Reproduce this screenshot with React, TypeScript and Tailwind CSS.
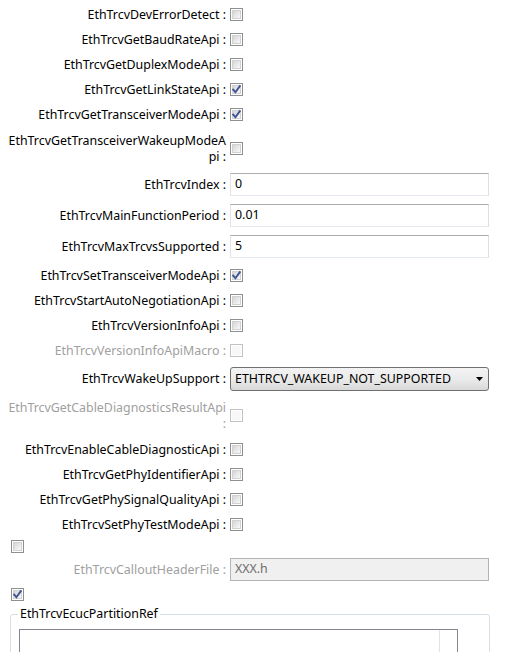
import React from "react";

function Checkbox({ checked = false, disabled = false }: { checked?: boolean; disabled?: boolean }) {
  return (
    <div
      className={`relative w-[13px] h-[13px] shrink-0 border bg-white p-[1px] ${
        disabled ? "border-[#c2c2c2]" : "border-[#8e8f8f]"
      }`}
    >
      <div
        className={`w-full h-full ${
          disabled
            ? "bg-[#f7f7f7]"
            : "border border-[#d2d2d2] bg-linear-to-br from-[#d4d4d4] via-[#e8e8e8] to-[#f8f8f8]"
        }`}
      />
      {checked && (
        <svg className="absolute left-0 top-0" width="11" height="11" viewBox="0 0 11 11">
          <path d="M2.2 5.6 L4.4 8.2 L8.8 2.2" fill="none" stroke="#3f5494" strokeWidth="1.9" strokeLinecap="square" />
        </svg>
      )}
    </div>
  );
}

function Label({ children, disabled = false }: { children: React.ReactNode; disabled?: boolean }) {
  return (
    <div
      className={`w-[226px] shrink-0 text-right leading-[16px] whitespace-nowrap ${
        disabled ? "text-[#a0a0a0]" : "text-[#000]"
      }`}
    >
      {children}
    </div>
  );
}

function TextInput({ value, disabled = false }: { value: string; disabled?: boolean }) {
  return (
    <div
      className={`ml-[4px] w-[259px] h-[23px] shrink-0 flex items-center pl-[4px] border ${
        disabled
          ? "bg-[#f0f0f0] border-[#b4b4b4] text-[#6d6d6d]"
          : "bg-white border-[#e3e9ef] border-t-[#abadb3] border-l-[#e2e3ea] border-r-[#dbdfe6] text-[#000]"
      }`}
    >
      {value}
    </div>
  );
}

function CheckRow({
  label,
  checked = false,
  disabled = false,
  mt,
}: {
  label: React.ReactNode;
  checked?: boolean;
  disabled?: boolean;
  mt: string;
}) {
  return (
    <div className={`flex items-center h-[13px] ${mt}`}>
      <Label disabled={disabled}>{label}</Label>
      <div className="ml-[4px]">
        <Checkbox checked={checked} disabled={disabled} />
      </div>
    </div>
  );
}

export default function App() {
  return (
    <div className="w-[528px] h-[652px] overflow-hidden bg-white text-[12.4px] font-['Noto_Sans','Open_Sans',sans-serif] text-black">
      <div className="flex flex-col">
        <CheckRow mt="mt-[8px]" label="EthTrcvDevErrorDetect :" />
        <CheckRow mt="mt-[12px]" label="EthTrcvGetBaudRateApi :" />
        <CheckRow mt="mt-[12px]" label="EthTrcvGetDuplexModeApi :" />
        <CheckRow mt="mt-[12px]" label="EthTrcvGetLinkStateApi :" checked />
        <CheckRow mt="mt-[12px]" label="EthTrcvGetTransceiverModeApi :" checked />
        <CheckRow
          mt="mt-[21px]"
          label={
            <>
              EthTrcvGetTransceiverWakeupModeA
              <br />
              pi :
            </>
          }
        />

        <div className="flex items-center h-[23px] mt-[18px]">
          <Label>EthTrcvIndex :</Label>
          <TextInput value="0" />
        </div>
        <div className="flex items-center h-[23px] mt-[8px]">
          <Label>EthTrcvMainFunctionPeriod :</Label>
          <TextInput value="0.01" />
        </div>
        <div className="flex items-center h-[23px] mt-[8px]">
          <Label>EthTrcvMaxTrcvsSupported :</Label>
          <TextInput value="5" />
        </div>

        <CheckRow mt="mt-[11px]" label="EthTrcvSetTransceiverModeApi :" checked />
        <CheckRow mt="mt-[12px]" label="EthTrcvStartAutoNegotiationApi :" />
        <CheckRow mt="mt-[12px]" label="EthTrcvVersionInfoApi :" />
        <CheckRow mt="mt-[12px]" label="EthTrcvVersionInfoApiMacro :" disabled />

        <div className="flex items-center h-[24px] mt-[10px]">
          <Label>EthTrcvWakeUpSupport :</Label>
          <div className="ml-[4px] w-[259px] h-[24px] shrink-0 flex items-center justify-between pl-[4px] pr-[4px] border border-[#707070] rounded-[3px] bg-linear-to-b from-[#f3f3f3] via-[#ebebeb] to-[#d8d8d8] text-[#000]">
            <span>ETHTRCV_WAKEUP_NOT_SUPPORTED</span>
            <svg width="7" height="4" viewBox="0 0 7 4" className="mr-[1px]">
              <path d="M0 0 H7 L3.5 4 Z" fill="#000" />
            </svg>
          </div>
        </div>

        <CheckRow
          mt="mt-[18px]"
          disabled
          label={
            <>
              EthTrcvGetCableDiagnosticsResultApi
              <br />:
            </>
          }
        />
        <CheckRow mt="mt-[21px]" label="EthTrcvEnableCableDiagnosticApi :" />
        <CheckRow mt="mt-[12px]" label="EthTrcvGetPhyIdentifierApi :" />
        <CheckRow mt="mt-[12px]" label="EthTrcvGetPhySignalQualityApi :" />
        <CheckRow mt="mt-[12px]" label="EthTrcvSetPhyTestModeApi :" />

        <div className="mt-[9px] ml-[11px]">
          <Checkbox />
        </div>

        <div className="flex items-center h-[23px] mt-[5px]">
          <Label disabled>EthTrcvCalloutHeaderFile :</Label>
          <TextInput value="XXX.h" disabled />
        </div>

        <div className="mt-[7px] ml-[11px]">
          <Checkbox checked />
        </div>

        <fieldset className="mt-[5px] ml-[10px] w-[480px] border border-[#d5dfe5] rounded-[3px] pb-[10px]">
          <legend className="ml-[7px] px-[2px] leading-[16px] text-[#000]">EthTrcvEcucPartitionRef</legend>
          <div className="mt-[7px] ml-[8px] w-[439px] h-[100px] border border-[#828790] flex justify-end">
            <div className="w-[18px] h-full border-l border-[#e3e3e3]" />
          </div>
        </fieldset>
      </div>
    </div>
  );
}
